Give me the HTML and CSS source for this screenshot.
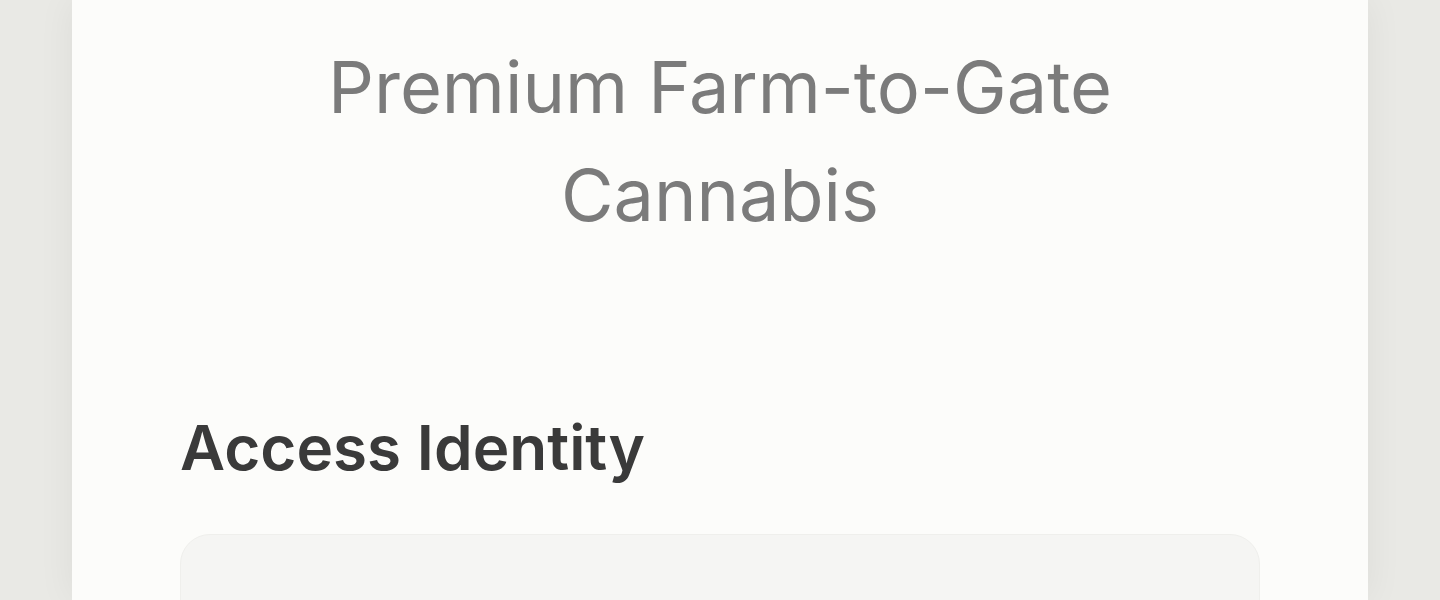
FILE: index.html
```html
<!DOCTYPE html>
<html lang="en">
<head>
<meta charset="utf-8">
<title>Access</title>
<link rel="stylesheet" href="styles.css">
</head>
<body>
<main class="card">
  <h1 class="title">Premium Farm-to-Gate<br>Cannabis</h1>
  <form class="form">
    <label class="label" for="identity">Access Identity</label>
    <input class="input" id="identity" type="text">
  </form>
</main>
</body>
</html>
```
FILE: styles.css
```css
html, body {
  margin: 0;
  padding: 0;
  height: 100%;
  overflow: hidden;
}
body {
  background: #e9e9e5;
  font-family: Inter, "Noto Sans", sans-serif;
  display: flex;
  justify-content: center;
}
.card {
  box-sizing: border-box;
  width: 1296px;
  min-height: 100%;
  background: #fcfcfa;
  box-shadow: 0 0 36px rgba(0, 0, 0, 0.06);
  padding: 33px 108px 0;
}
.title {
  margin: 0;
  text-align: center;
  font-size: 72px;
  line-height: 108px;
  font-weight: 400;
  color: #7b7b7b;
}
.form {
  display: flex;
  flex-direction: column;
  margin-top: 151px;
}
.label {
  font-size: 62px;
  line-height: 96px;
  font-weight: 600;
  color: #3a3a3a;
  margin-bottom: 38px;
}
.input {
  box-sizing: border-box;
  width: 100%;
  height: 120px;
  background: #f5f5f3;
  border: 1px solid #efefec;
  border-radius: 30px;
  outline: none;
}
```
